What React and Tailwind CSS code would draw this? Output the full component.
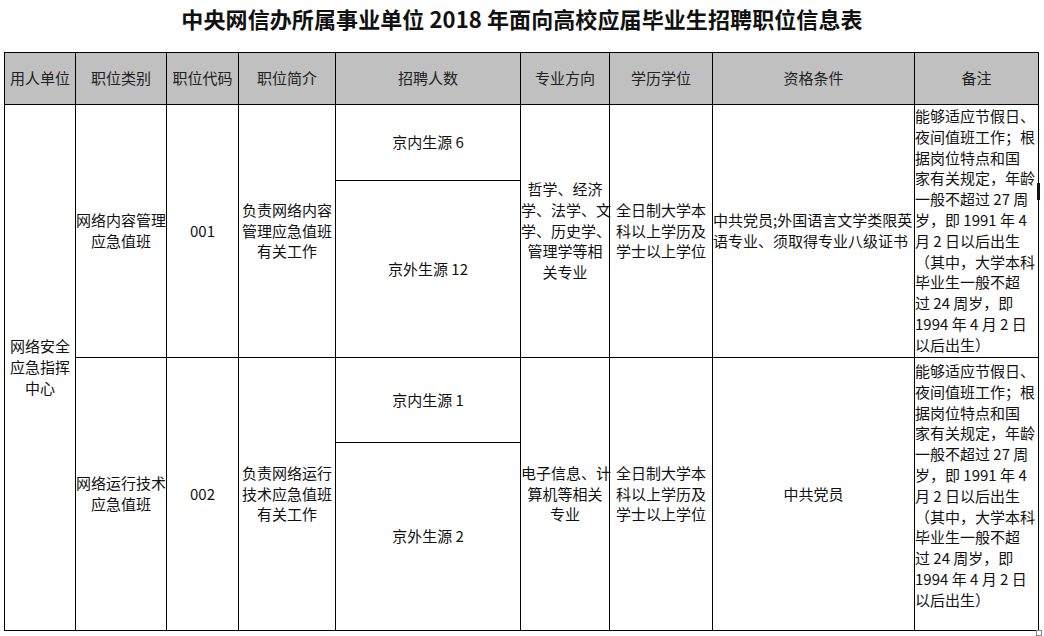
import React from 'react';

const cell = 'border border-black p-0 align-middle text-center whitespace-nowrap';

const Lines = ({ items, className = '' }) => (
  <div className={className}>
    {items.map((t, i) => (
      <div key={i}>{t}</div>
    ))}
  </div>
);

const remark = [
  '能够适应节假日、',
  '夜间值班工作；根',
  '据岗位特点和国',
  '家有关规定，年龄',
  '一般不超过 27 周',
  '岁，即 1991 年 4',
  '月 2 日以后出生',
  '（其中，大学本科',
  '毕业生一般不超',
  '过 24 周岁，即',
  '1994 年 4 月 2 日',
  '以后出生）',
];

const headers = ['用人单位', '职位类别', '职位代码', '职位简介', '招聘人数', '专业方向', '学历学位', '资格条件', '备注'];
const widths = [71, 91, 72, 97, 185, 89, 103, 202, 124];

const App = () => {
  return (
    <div className="relative w-[1044px] h-[636px] overflow-hidden bg-white text-[#111] font-['Noto_Sans_CJK_SC',sans-serif]">
      <h1 className="h-[36px] text-center text-[22px] font-bold leading-[36px] tracking-[0.1px]">
        中央网信办所属事业单位 2018 年面向高校应届毕业生招聘职位信息表
      </h1>

      <div className="relative pl-[4px] pt-[16px]">
        <table className="w-[1034px] table-fixed border-collapse text-[15px] leading-[20.8px]">
          <colgroup>
            {widths.map((w, i) => (
              <col key={i} style={{ width: w }} />
            ))}
          </colgroup>
          <thead>
            <tr className="h-[52px] bg-[#c0c0c0]">
              {headers.map((h) => (
                <th key={h} className={`${cell} font-normal text-[#222]`}>{h}</th>
              ))}
            </tr>
          </thead>
          <tbody>
            {/* 第一个职位 */}
            <tr className="h-[76px]">
              <td rowSpan={4} className={cell}>
                <Lines items={['网络安全', '应急指挥', '中心']} />
              </td>
              <td rowSpan={2} className={cell}>
                <Lines items={['网络内容管理', '应急值班']} />
              </td>
              <td rowSpan={2} className={cell}>001</td>
              <td rowSpan={2} className={cell}>
                <Lines items={['负责网络内容', '管理应急值班', '有关工作']} />
              </td>
              <td className={cell}>京内生源 6</td>
              <td rowSpan={2} className={cell}>
                <Lines items={['哲学、经济', '学、法学、文', '学、历史学、', '管理学等相', '关专业']} />
              </td>
              <td rowSpan={2} className={cell}>
                <Lines items={['全日制大学本', '科以上学历及', '学士以上学位']} />
              </td>
              <td rowSpan={2} className={`${cell} text-left`}>
                <Lines items={['中共党员;外国语言文学类限英', '语专业、须取得专业八级证书']} />
              </td>
              <td rowSpan={2} className={`${cell} text-left align-top`}>
                <Lines items={remark} className="pt-px" />
              </td>
            </tr>
            <tr className="h-[177px]">
              <td className={cell}>京外生源 12</td>
            </tr>

            {/* 第二个职位 */}
            <tr className="h-[85px]">
              <td rowSpan={2} className={cell}>
                <Lines items={['网络运行技术', '应急值班']} />
              </td>
              <td rowSpan={2} className={cell}>002</td>
              <td rowSpan={2} className={cell}>
                <Lines items={['负责网络运行', '技术应急值班', '有关工作']} />
              </td>
              <td className={cell}>京内生源 1</td>
              <td rowSpan={2} className={cell}>
                <Lines items={['电子信息、计', '算机等相关', '专业']} />
              </td>
              <td rowSpan={2} className={cell}>
                <Lines items={['全日制大学本', '科以上学历及', '学士以上学位']} />
              </td>
              <td rowSpan={2} className={cell}>中共党员</td>
              <td rowSpan={2} className={`${cell} text-left align-top`}>
                <Lines items={remark} className="pt-[3px]" />
              </td>
            </tr>
            <tr className="h-[188px]">
              <td className={cell}>京外生源 2</td>
            </tr>
          </tbody>
        </table>

        {/* 表格右侧的调整手柄 */}
        <div className="absolute left-[1037px] top-[147px] h-[17px] w-[3px] bg-[#111]" />
        <div className="absolute left-[1036px] top-[594px] h-[6px] w-[6px] border border-[#888] bg-white" />
      </div>
    </div>
  );
};

export default App;
